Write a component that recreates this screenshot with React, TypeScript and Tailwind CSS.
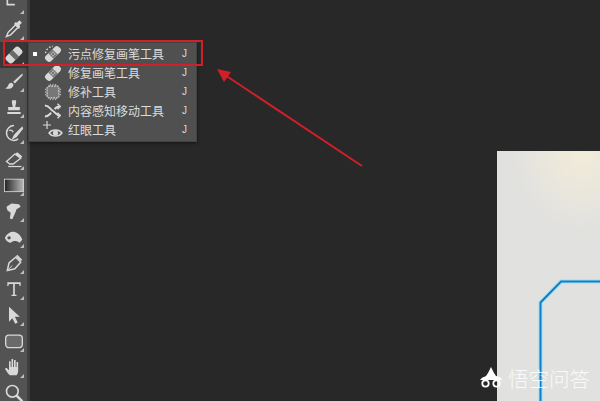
import React from "react";

const S = ({ children }: { children: React.ReactNode }) => (
  <svg viewBox="0 0 24 24" className="w-[20px] h-[20px]" fill="none">{children}</svg>
);
const W = "#d8d8d8";

const Bandage = ({ dotted = false }: { dotted?: boolean }) => (
  <svg viewBox="0 0 24 24" className="w-[20px] h-[20px]" fill="none">
    {dotted && <path d="M3 11 A9 9 0 0 1 12 3" stroke={W} strokeWidth="1.600" strokeDasharray="2 2" />}
    <g transform="rotate(-45 12 12)">
      <rect x="1" y="7.500" width="22" height="9" rx="3.500" fill={W} />
      <rect x="8.500" y="7.500" width="7" height="9" fill="#777" />
      <circle cx="10.500" cy="10.500" r=".8" fill={W} /><circle cx="13.500" cy="10.500" r=".8" fill={W} />
      <circle cx="10.500" cy="13.500" r=".8" fill={W} /><circle cx="13.500" cy="13.500" r=".8" fill={W} />
    </g>
  </svg>
);

const tools: React.ReactNode[] = [
  <path key="a" d="M4 2v12h9M14 2v6M8 6h12" stroke={W} strokeWidth="2" />,
  <g key="b"><path d="M3 21l2-5L14 7l3 3L8 19z" stroke={W} strokeWidth="1.800" /><path d="M12 6l6 6 1.500-3-1-1.500 3-3-3-3-3 3-1.500-1z" fill={W} /></g>,
  <g key="c" transform="rotate(-45 12 12)"><rect x="1" y="6.500" width="22" height="11" rx="4" fill={W} /><rect x="9" y="6.500" width="6" height="11" fill="#6a6a6a" /></g>,
  <path key="d" d="M22 3L11 13l2 2L22.500 5zM9.500 14c-3 0-4 1.500-4.500 3.500-.5 1.500-1.500 2.500-3.500 3.500 4 1 9 .5 10-4.500z" fill={W} />,
  <path key="e" d="M9.500 4h5v3l-1 5H19v4H5v-4h5.500l-1-5zM4 18h16v2.500H4z" fill={W} />,
  <g key="f"><path d="M12 3a9 9 0 1 0 0 18c2 0 4-1 5-2" stroke={W} strokeWidth="1.800" /><path d="M22 4L12 14l-3 6 6-3L23 7z" fill={W} /><path d="M6 9c2-1 4 0 5 2" stroke={W} strokeWidth="1.600" /></g>,
  <g key="g"><path d="M3 15l10-9 7 5-9 7H7z" stroke={W} strokeWidth="1.600" /><path d="M13 6l3-2 6 5-2 2z" fill={W} /><path d="M5 21h16" stroke={W} strokeWidth="1.500" /></g>,
  <g key="h"><defs><linearGradient id="gr"><stop offset="0" stopColor="#222" /><stop offset="1" stopColor="#bbb" /></linearGradient></defs><rect x="0.500" y="5" width="23" height="15" fill="url(#gr)" stroke={W} strokeWidth="1" /></g>,
  <path key="i" d="M3 7l6-4 9 1 2 3-5 3-1 3-4 9-3-1 1-7-4-3z" fill={W} />,
  <path key="j" d="M1 13c3-6 8-8 12-7s7 4 9 9l-3 4c-4-3-8-3-11 0-3 0-6-3-7-6zM6 11a2 2 0 1 0 .1 0z" fill={W} fillRule="evenodd" />,
  <g key="k"><path d="M4 21l2-9 8-7 6 6-7 8z" stroke={W} strokeWidth="1.800" /><path d="M15 3l6 6" stroke={W} strokeWidth="2.500" /><path d="M5 20l5-5" stroke={W} strokeWidth="1.200" /></g>,
  <path key="l" d="M4 4h16v4.500h-1.200l-.8-2.500h-5v13H15v1.500H9V19h2V6H6l-.8 2.500H4z" fill={W} />,
  <path key="m" d="M6 2l13 12h-6l3.500 7-3 1.500L10 16l-4 4z" fill={W} />,
  <rect key="n" x="2" y="5" width="20" height="15" rx="4" fill="#6a6a6a" stroke={W} strokeWidth="1.600" />,
  <path key="o" d="M7 22c-2-2-4-5-6-8l2-1 3 3V5h2v7h1V2.500h2V12h1V3.500h2V12h1V6h2v10c0 3-1 5-2 6z" fill={W} />,
  <g key="p"><circle cx="10" cy="10" r="7" stroke={W} strokeWidth="2" /><path d="M15 15l7 7" stroke={W} strokeWidth="3" /></g>,
];

const menu: [React.ReactNode, string, boolean][] = [
  [<Bandage dotted />, "污点修复画笔工具", true],
  [<Bandage />, "修复画笔工具", false],
  [
    <svg viewBox="0 0 20 20" className="w-[18px] h-[18px]" fill="none">
      <rect x="3.500" y="3.500" width="13" height="13" rx="1.500" fill="#777" stroke={W} strokeWidth="1.300" strokeDasharray="2 1" />
      <path d="M1 7h2M1 10h2M1 13h2M17 7h2M17 10h2M17 13h2M7 1v2M10 1v2M13 1v2M7 17v2M10 17v2M13 17v2" stroke={W} />
    </svg>,
    "修补工具",
    false,
  ],
  [
    <svg viewBox="0 0 20 20" className="w-[18px] h-[18px]" fill="none" stroke={W} strokeWidth="2.200">
      <path d="M1 4c5 0 6 4 9 6s4 5 8 5M1 16c4 0 5-2 7-4M12 8c1-2 3-3 6-3" />
      <path d="M15 2l3 3-3 3M15 12l3 3-3 3" strokeWidth="1.600" />
    </svg>,
    "内容感知移动工具",
    false,
  ],
  [
    <svg viewBox="0 0 22 20" className="w-[22px] h-[20px]" fill="none">
      <path d="M5 1v8M1 5h8" stroke={W} strokeWidth="1.200" />
      <path d="M7 13c3-4 10-4 13 0-3 4-10 4-13 0z" stroke={W} strokeWidth="1.400" />
      <circle cx="13.500" cy="13" r="2.600" fill={W} />
    </svg>,
    "红眼工具",
    false,
  ],
];

export default function App() {
  return (
    <div
      className="relative flex w-[600px] h-[401px] overflow-hidden bg-[#282828] text-[#dcdcdc]"
      style={{ fontFamily: '"Noto Sans CJK SC", "Noto Sans", sans-serif' }}
    >
      <aside className="w-[27px] shrink-0 bg-[#535353]">
        <div className="flex flex-col -mt-[10px]">
          {tools.map((t, i) => (
            <div key={i} className={"relative flex items-center justify-center h-[26px] " + (i === 2 ? "bg-[#383838]" : "")}>
              <S>{t}</S>
              {i !== 15 && <span className="absolute right-[3px] bottom-[2px] w-0 h-0 border-l-[4px] border-l-transparent border-b-[4px] border-b-[#bdbdbd]" />}
            </div>
          ))}
        </div>
      </aside>
      <div className="w-[3px] shrink-0 bg-[#3d3d3d]" />

      <main className="flex-1 pt-[151px] pl-[467px]">
        <div className="relative h-full bg-[#e1e1df] overflow-hidden">
          <div className="absolute inset-0 bg-[radial-gradient(ellipse_70px_80px_at_85px_0px,#f2ecd9,transparent)]" />
          <svg className="absolute left-0 top-0 w-full h-full" fill="none">
            <path d="M43.500 250V151.500L64 130.500H103" stroke="#a8dcf2" strokeWidth="4" />
            <path d="M43.500 250V151.500L64 130.500H103" stroke="#0c80c8" strokeWidth="2" />
          </svg>
        </div>
      </main>

      <div className="absolute left-[28px] top-[42px] w-[169px] h-[100px] bg-[#505050] border border-[#444] shadow-[0_1px_3px_rgba(0,0,0,.5)] pt-[1px]">
        {menu.map(([icon, label, sel], i) => (
          <div key={i} className="flex items-center h-[19px] text-[12px] leading-none">
            <span className="flex w-[8px] justify-end shrink-0">
              {sel && <span className="w-[4px] h-[4px] bg-white" />}
            </span>
            <span className="flex w-[31px] justify-center shrink-0">{icon}</span>
            <span className="flex-1 whitespace-nowrap">{label}</span>
            <span className="w-[14px] text-[10px]" style={{ fontFamily: '"Liberation Sans", sans-serif' }}>J</span>
          </div>
        ))}
      </div>

      <div className="absolute left-[3px] top-[40px] w-[200px] h-[26px] border-2 border-[#d0202a]" />
      <svg className="absolute left-0 top-0 w-[600px] h-[401px] pointer-events-none" fill="none">
        <path d="M362 166L222 73" stroke="#cf2027" strokeWidth="2" />
        <path d="M217 69L231 72L224 82z" fill="#cf2027" />
      </svg>

      <div className="absolute left-[479px] top-[367px] flex items-center gap-[5px] text-white/80 text-[20.500px] leading-none font-light">
        <svg viewBox="0 0 24 22" className="w-[24px] h-[22px]" fill="none">
          <path d="M1 13c2-3 4-3 6-4l2-3 3-6 3 6 2 3c3 1 5 1 6 4z" fill="#fff" />
          <circle cx="6.500" cy="16.500" r="3.200" stroke="#fff" strokeWidth="1.800" />
          <circle cx="17.500" cy="16.500" r="3.200" stroke="#fff" strokeWidth="1.800" />
        </svg>
        <span>悟空问答</span>
      </div>
    </div>
  );
}
